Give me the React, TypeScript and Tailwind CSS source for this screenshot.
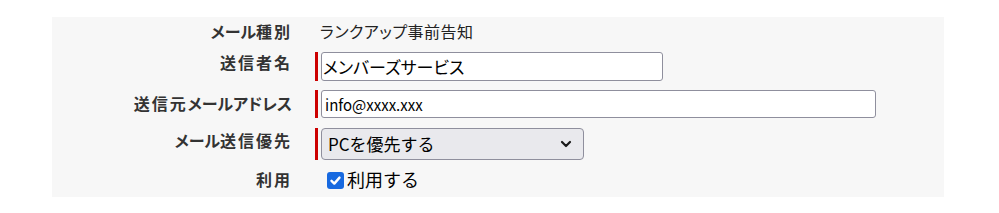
import React from "react";

const font = { fontFamily: '"Noto Sans CJK JP", "Noto Sans", sans-serif' };
const palt = { ...font, fontFeatureSettings: '"palt"' };

// katakana runs sit tighter than kanji in the labels
function spaced(text: string) {
  return text.split(/([\u30A0-\u30FF]+)/).map((part, i) =>
    /[\u30A0-\u30FF]/.test(part) ? (
      <span key={i} className="tracking-normal">{part}</span>
    ) : (
      <span key={i}>{part}</span>
    )
  );
}

function Label({ text, pt = "pt-0" }: { text: string; pt?: string }) {
  return (
    <div
      className={`w-[240px] shrink-0 text-right text-[16px] leading-[22px] tracking-[2px] font-bold text-[#333] ${pt}`}
      style={palt}
    >
      {spaced(text)}
    </div>
  );
}

function Required({ children }: { children: React.ReactNode }) {
  return (
    <div className="flex items-stretch gap-[3px]">
      <span className="w-[3px] bg-[#cc0000]" />
      {children}
    </div>
  );
}

export default function App() {
  return (
    <div className="w-[999px] h-[213px] bg-white pt-[17px]" style={font}>
      <div className="ml-[52px] w-[892px] h-[180px] bg-[#f7f7f7] pt-[3px]">
        {/* メール種別 */}
        <div className="flex items-start">
          <Label text="メール種別" />
          <div className="ml-[28px] text-[16px] leading-[22px] tracking-[0.5px] text-[#222]" style={palt}>
            ランクアップ事前告知
          </div>
        </div>

        {/* 送信者名 */}
        <div className="flex items-start mt-[9px]">
          <Label text="送信者名" />
          <div className="ml-[23px] mt-[1px]">
            <Required>
              <input
                type="text"
                defaultValue="メンバーズサービス"
                className="w-[342px] h-[29px] bg-white border border-[#8f8f9d] rounded-[3px] px-[1px] text-[17px] text-black outline-none"
                style={palt}
              />
            </Required>
          </div>
        </div>

        {/* 送信元メールアドレス */}
        <div className="flex items-start mt-[8px]">
          <Label text="送信元メールアドレス" pt="pt-[3px]" />
          <div className="ml-[23px] mt-[1px]">
            <Required>
              <input
                type="text"
                defaultValue="info@xxxx.xxx"
                className="w-[555px] h-[28px] bg-white border border-[#8f8f9d] rounded-[3px] px-[3px] text-[15px] text-black outline-none"
                style={font}
              />
            </Required>
          </div>
        </div>

        {/* メール送信優先 */}
        <div className="flex items-start mt-[10px]">
          <Label text="メール送信優先" pt="pt-[1px]" />
          <div className="ml-[23px]">
            <Required>
              <div className="relative w-[263px] h-[32px] bg-[#e9e9ed] border border-[#8f8f9d] rounded-[4px] flex items-center pl-[6px] text-[17px] text-black">
                PCを優先する
                <svg
                  className="absolute right-[11px] top-1/2 -translate-y-1/2"
                  width="12"
                  height="8"
                  viewBox="0 0 12 8"
                  fill="none"
                  stroke="#1a1a1a"
                  strokeWidth="2.2"
                  strokeLinecap="round"
                  strokeLinejoin="round"
                >
                  <path d="M2 2l4 4 4-4" />
                </svg>
              </div>
            </Required>
          </div>
        </div>

        {/* 利用 */}
        <div className="flex items-start mt-[7px]">
          <Label text="利用" pt="pt-[1px]" />
          <label className="ml-[35px] flex items-center gap-[3px] text-[18px] leading-[24px] text-black">
            <span className="w-[17px] h-[17px] rounded-[3px] bg-[#1769e0] flex items-center justify-center mt-[3px]">
              <svg width="13" height="13" viewBox="0 0 13 13" fill="none" stroke="white" strokeWidth="2.4" strokeLinecap="round" strokeLinejoin="round">
                <path d="M2.5 6.8l2.8 2.8 5.2-6" />
              </svg>
            </span>
            利用する
          </label>
        </div>
      </div>
    </div>
  );
}
